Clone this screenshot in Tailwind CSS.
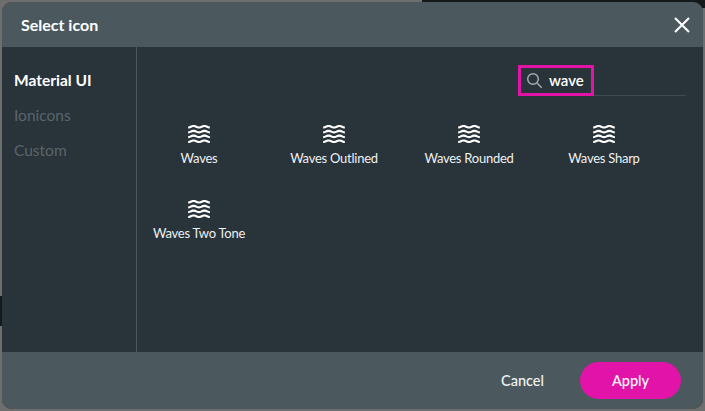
<!DOCTYPE html>
<html lang="en">
<head>
  <meta charset="UTF-8" />
  <title>Select icon</title>
  <meta name="viewport" content="width=device-width, initial-scale=1.0" />
  <script src="https://cdn.jsdelivr.net/npm/@tailwindcss/browser@4"></script>
</head>
<body class="h-[411px] w-[705px] overflow-hidden bg-[#6e6e6e] font-['Lato',sans-serif]">
  <!-- page behind the overlay -->
  <div class="absolute left-[422px] top-0 h-[8px] w-[283px] bg-[#141a1c]"></div>
  <div class="absolute left-0 top-[296px] h-[30px] w-[2px] bg-[#141a1c]"></div>

  <svg class="hidden">
    <symbol id="waves" viewBox="0 0 24 24"><path d="M17 16.99c-1.35 0-2.2.42-2.95.8-.65.33-1.18.6-2.05.6-.9 0-1.4-.25-2.05-.6-.75-.38-1.57-.8-2.95-.8s-2.2.42-2.95.8c-.65.33-1.17.6-2.05.6v1.95c1.35 0 2.2-.42 2.95-.8.65-.33 1.17-.6 2.05-.6s1.4.25 2.05.6c.75.38 1.57.8 2.95.8s2.2-.42 2.95-.8c.65-.33 1.18-.6 2.05-.6.9 0 1.4.25 2.05.6.75.38 1.58.8 2.95.8v-1.95c-.9 0-1.4-.25-2.05-.6-.75-.38-1.6-.8-2.95-.8zm0-4.45c-1.35 0-2.2.43-2.95.8-.65.32-1.18.6-2.05.6-.9 0-1.4-.25-2.05-.6-.75-.38-1.57-.8-2.95-.8s-2.2.43-2.95.8c-.65.32-1.17.6-2.05.6v1.95c1.35 0 2.2-.43 2.95-.8.65-.35 1.15-.6 2.05-.6s1.4.25 2.05.6c.75.38 1.57.8 2.95.8s2.2-.43 2.95-.8c.65-.35 1.15-.6 2.05-.6s1.4.25 2.05.6c.75.38 1.58.8 2.95.8v-1.95c-.9 0-1.4-.25-2.05-.6-.75-.38-1.6-.8-2.95-.8zm2.95-8.08c-.75-.38-1.58-.8-2.95-.8s-2.2.42-2.95.8c-.65.32-1.18.6-2.05.6-.9 0-1.4-.25-2.05-.6-.75-.37-1.57-.8-2.95-.8s-2.2.42-2.95.8c-.65.33-1.17.6-2.05.6v1.93c1.35 0 2.2-.43 2.95-.8.65-.33 1.17-.6 2.05-.6s1.4.25 2.05.6c.75.38 1.57.8 2.95.8s2.2-.43 2.95-.8c.65-.32 1.18-.6 2.05-.6.9 0 1.4.25 2.05.6.75.38 1.58.8 2.95.8V5.04c-.9 0-1.4-.25-2.05-.58zM17 8.09c-1.35 0-2.2.43-2.95.8-.65.35-1.15.6-2.05.6s-1.4-.25-2.05-.6c-.75-.38-1.57-.8-2.95-.8s-2.2.43-2.95.8c-.65.35-1.15.6-2.05.6v1.95c1.35 0 2.2-.43 2.95-.8.65-.32 1.18-.6 2.05-.6s1.4.25 2.05.6c.75.38 1.57.8 2.95.8s2.2-.43 2.95-.8c.65-.32 1.18-.6 2.05-.6.9 0 1.4.25 2.05.6.75.38 1.58.8 2.95.8V9.49c-.9 0-1.4-.25-2.05-.6-.75-.38-1.6-.8-2.95-.8z" /></symbol>
  </svg>

  <div class="relative flex h-[411px] w-[705px] p-[2px]">
    <div class="flex w-full flex-col overflow-hidden rounded-[10px] bg-[#29333a]">
      <header class="flex h-[45px] shrink-0 items-center justify-between bg-[#4b595e] pl-[19px] pr-[13px]">
        <h2 class="text-[16px] font-bold text-white">Select icon</h2>
        <button class="text-white">
          <svg class="h-[16px] w-[16px]" viewBox="0 0 16 16" fill="none" stroke="currentColor" stroke-width="2.1"><path d="M1 1l14 14M15 1L1 15" /></svg>
        </button>
      </header>

      <div class="flex min-h-0 flex-1">
        <nav class="flex w-[135px] shrink-0 flex-col gap-[14px] border-r border-[#4b595e] pl-[12px] pt-[23px] text-[15.5px] leading-[21px]">
          <a class="font-bold text-white">Material UI</a>
          <a class="text-[#5a656b]">Ionicons</a>
          <a class="text-[#5a656b]">Custom</a>
        </nav>

        <main class="flex-1">
          <div class="ml-[381px] mt-[18px] flex h-[31px] w-[168px] border-b border-[#3f4b52]">
            <div class="flex h-[31px] w-[76px] items-center gap-[6px] border-[3px] border-[#e413a8] pl-[5px]">
              <svg class="h-[17px] w-[17px] shrink-0" viewBox="0 0 17 17" fill="none" stroke="#a5acaf" stroke-width="1.5"><circle cx="7" cy="7" r="5.3" /><path d="M11 11l4.7 4.7" /></svg>
              <span class="text-[15px] font-semibold text-white">wave</span>
            </div>
          </div>

          <div class="mt-[25px] grid grid-cols-[repeat(4,124px)] gap-x-[11px] gap-y-[22px]">
            <div class="flex h-[53px] flex-col items-center text-[13px] leading-[18px] tracking-[-0.25px] text-[#eef0f1]">
              <svg class="h-[26px] w-[26px] fill-white"><use href="#waves" /></svg>
              <span class="mt-[2px]">Waves</span>
            </div>
            <div class="flex h-[53px] flex-col items-center text-[13px] leading-[18px] tracking-[-0.25px] text-[#eef0f1]">
              <svg class="h-[26px] w-[26px] fill-white"><use href="#waves" /></svg>
              <span class="mt-[2px]">Waves Outlined</span>
            </div>
            <div class="flex h-[53px] flex-col items-center text-[13px] leading-[18px] tracking-[-0.25px] text-[#eef0f1]">
              <svg class="h-[26px] w-[26px] fill-white"><use href="#waves" /></svg>
              <span class="mt-[2px]">Waves Rounded</span>
            </div>
            <div class="flex h-[53px] flex-col items-center text-[13px] leading-[18px] tracking-[-0.25px] text-[#eef0f1]">
              <svg class="h-[26px] w-[26px] fill-white"><use href="#waves" /></svg>
              <span class="mt-[2px]">Waves Sharp</span>
            </div>
            <div class="flex h-[53px] flex-col items-center text-[13px] leading-[18px] tracking-[-0.25px] text-[#eef0f1]">
              <svg class="h-[26px] w-[26px] fill-white"><use href="#waves" /></svg>
              <span class="mt-[2px]">Waves Two Tone</span>
            </div>
          </div>
        </main>
      </div>

      <footer class="flex h-[57px] shrink-0 items-center justify-end gap-[36px] bg-[#4b595e] pr-[22px]">
        <button class="text-[14.5px] font-medium text-[#f1f3f3]">Cancel</button>
        <button class="h-[37px] w-[101px] rounded-full bg-[#e113a8] text-[14.5px] font-medium text-white">Apply</button>
      </footer>
    </div>
  </div>
</body>
</html>
